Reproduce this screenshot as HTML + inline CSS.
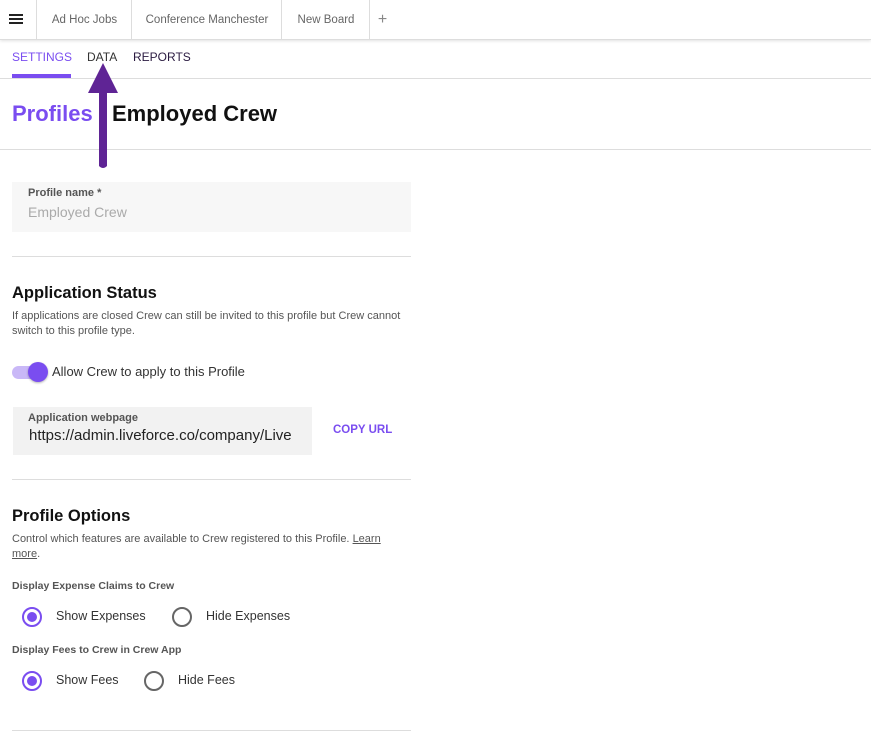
<!DOCTYPE html>
<html><head><style>
*{margin:0;padding:0;box-sizing:border-box}
body{width:871px;height:741px;background:#fff;font-family:"Liberation Sans",sans-serif;position:relative;overflow:hidden;color:#222}
.a{position:absolute;white-space:nowrap}
.top{position:absolute;left:0;top:0;width:871px;height:40px;border-bottom:1px solid #ddd;box-shadow:0 1px 3px rgba(0,0,0,.12)}
.tab{position:absolute;top:0;height:40px;border-left:1px solid #ddd;font-size:11.5px;color:#666;line-height:40px;text-align:center}
.hr{position:absolute;height:1px;background:#ddd}
.radio{position:absolute;width:20px;height:20px;border-radius:50%;border:2px solid #666}
.radio.on{border-color:#7a4df0}
.radio.on::after{content:"";position:absolute;left:3px;top:3px;width:10px;height:10px;border-radius:50%;background:#7a4df0}
</style></head><body>
<div class="top">
<div class="a" style="left:9px;top:14px;width:14px;height:2px;background:#222;box-shadow:0 4px 0 #222,0 8px 0 #222"></div>
<div class="tab" style="left:36px;width:96px">Ad Hoc Jobs</div>
<div class="tab" style="left:131px;width:151px">Conference Manchester</div>
<div class="tab" style="left:281px;width:89px">New Board</div>
<div class="tab" style="left:369px;width:26px;font-size:16px;color:#888">+</div>
</div>
<div class="a" style="left:12px;top:50px;font-size:12px;color:#7a4df0">SETTINGS</div>
<div class="a" style="left:12px;top:74px;width:59px;height:4px;background:#7a4df0"></div>
<div class="a" style="left:87px;top:50px;font-size:12px;color:#333">DATA</div>
<div class="a" style="left:133px;top:50px;font-size:12px;color:#2a1a40">REPORTS</div>
<div class="hr" style="left:0;top:78px;width:871px"></div>
<div class="a" style="left:12px;top:101px;font-size:22px;font-weight:bold;color:#7a4df0">Profiles</div>
<div class="a" style="left:112px;top:101px;font-size:22px;font-weight:bold;color:#111">Employed Crew</div>
<div class="hr" style="left:0;top:149px;width:871px"></div>
<svg class="a" style="left:86px;top:62px" width="34" height="110"><path d="M17 1 L32 31 L21 31 L21 104 Q17 108 13 104 L13 31 L2 31 Z" fill="#5f2495"/></svg>
<div class="a" style="left:12px;top:182px;width:399px;height:50px;background:#f7f7f7"></div>
<div class="a" style="left:28px;top:187px;font-size:11px;font-weight:bold;color:#555">Profile name *</div>
<div class="a" style="left:28px;top:204px;font-size:14px;color:#aaa">Employed Crew</div>
<div class="hr" style="left:12px;top:256px;width:399px"></div>
<div class="a" style="left:12px;top:284px;font-size:16.5px;font-weight:bold;color:#111">Application Status</div>
<div class="a" style="left:12px;top:309px;font-size:11px;color:#555;line-height:15px">If applications are closed Crew can still be invited to this profile but Crew cannot<br>switch to this profile type.</div>
<div class="a" style="left:12px;top:366px;width:34px;height:13px;border-radius:7px;background:#c9b8f7"></div>
<div class="a" style="left:28px;top:362px;width:20px;height:20px;border-radius:50%;background:#7a4df0;box-shadow:0 1px 2px rgba(0,0,0,.3)"></div>
<div class="a" style="left:52px;top:364px;font-size:13px;color:#333">Allow Crew to apply to this Profile</div>
<div class="a" style="left:13px;top:407px;width:299px;height:48px;background:#f2f2f2;overflow:hidden">
<div class="a" style="left:15px;top:5px;font-size:11px;font-weight:bold;color:#555">Application webpage</div>
<div class="a" style="left:16px;top:20px;font-size:15px;color:#222">https://admin.liveforce.co/company/Live</div>
</div>
<div class="a" style="left:333px;top:424px;font-size:11.5px;font-weight:bold;color:#7a4df0">COPY URL</div>
<div class="hr" style="left:12px;top:479px;width:399px"></div>
<div class="a" style="left:12px;top:507px;font-size:16.5px;font-weight:bold;color:#111">Profile Options</div>
<div class="a" style="left:12px;top:532px;font-size:11px;color:#555;line-height:15px">Control which features are available to Crew registered to this Profile. <u>Learn</u><br><u>more</u>.</div>
<div class="a" style="left:12px;top:580px;font-size:10.5px;font-weight:bold;color:#555">Display Expense Claims to Crew</div>
<div class="radio on" style="left:22px;top:607px"></div>
<div class="a" style="left:56px;top:609px;font-size:12.5px;color:#333">Show Expenses</div>
<div class="radio" style="left:172px;top:607px"></div>
<div class="a" style="left:206px;top:609px;font-size:12.5px;color:#333">Hide Expenses</div>
<div class="a" style="left:12px;top:644px;font-size:10.5px;font-weight:bold;color:#555">Display Fees to Crew in Crew App</div>
<div class="radio on" style="left:22px;top:671px"></div>
<div class="a" style="left:56px;top:673px;font-size:12.5px;color:#333">Show Fees</div>
<div class="radio" style="left:144px;top:671px"></div>
<div class="a" style="left:178px;top:673px;font-size:12.5px;color:#333">Hide Fees</div>
<div class="hr" style="left:12px;top:730px;width:399px"></div>
</body></html>
